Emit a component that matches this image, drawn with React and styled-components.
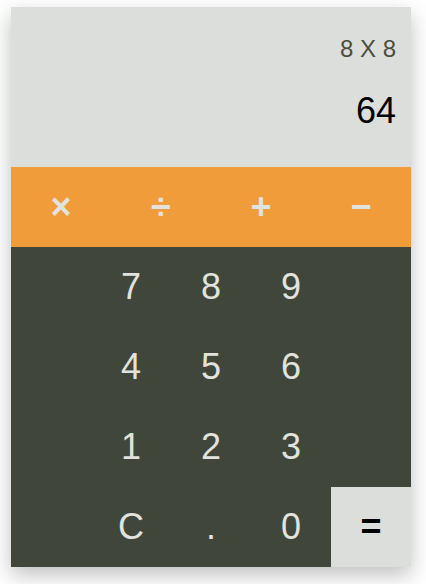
import React, { useState } from "react";
import styled, { createGlobalStyle } from "styled-components";

const operators = ["×", "÷", "+", "−"];

const keys = [
  [null, "7", "8", "9", null],
  [null, "4", "5", "6", null],
  [null, "1", "2", "3", null],
  [null, "C", ".", "0", "="],
];

const App = () => {
  const [expression] = useState("8 X 8");
  const [result] = useState("64");

  return (
    <>
      <Global />
      <Page>
        <Calculator>
          <Display>
            <Expression>{expression}</Expression>
            <Result>{result}</Result>
          </Display>
          <OperatorRow>
            {operators.map((op) => (
              <OperatorButton key={op}>{op}</OperatorButton>
            ))}
          </OperatorRow>
          <Keypad>
            {keys.flat().map((k, i) =>
              k === null ? (
                <Blank key={i} />
              ) : (
                <Key key={i} $equals={k === "="}>
                  {k}
                </Key>
              )
            )}
          </Keypad>
        </Calculator>
      </Page>
    </>
  );
};

const Global = createGlobalStyle`
  html, body {
    margin: 0;
    background: #ffffff;
  }
  body {
    font-family: "Liberation Sans", Arial, sans-serif;
  }
`;

const Page = styled.div`
  padding: 7px 0 20px 11px;
`;

const Calculator = styled.div`
  width: 400px;
  box-shadow: 0 8px 20px rgba(0, 0, 0, 0.25);
`;

const Display = styled.div`
  height: 160px;
  box-sizing: border-box;
  background: #dcdedc;
  padding: 30px 15px 0 0;
  display: flex;
  flex-direction: column;
  align-items: flex-end;
`;

const Expression = styled.div`
  font-size: 24px;
  line-height: 24px;
  color: #4a4e40;
`;

const Result = styled.div`
  margin-top: 30px;
  font-size: 36px;
  line-height: 40px;
  color: #000000;
`;

const OperatorRow = styled.div`
  height: 80px;
  background: #f09c3a;
  display: grid;
  grid-template-columns: repeat(4, 1fr);
`;

const OperatorButton = styled.button`
  border: none;
  background: transparent;
  color: #e2e2de;
  font-family: "Liberation Sans", Arial, sans-serif;
  font-size: 36px;
  font-weight: bold;
  padding: 0;
  cursor: pointer;
`;

const Keypad = styled.div`
  background: #41463a;
  display: grid;
  grid-template-columns: repeat(5, 80px);
  grid-auto-rows: 80px;
`;

const Blank = styled.div``;

const Key = styled.button`
  border: none;
  padding: 0;
  background: ${(p) => (p.$equals ? "#dcdedc" : "transparent")};
  color: ${(p) => (p.$equals ? "#000000" : "#e2e2de")};
  font-family: "Liberation Sans", Arial, sans-serif;
  font-size: 36px;
  font-weight: ${(p) => (p.$equals ? "bold" : "normal")};
  cursor: pointer;
`;

export default App;
